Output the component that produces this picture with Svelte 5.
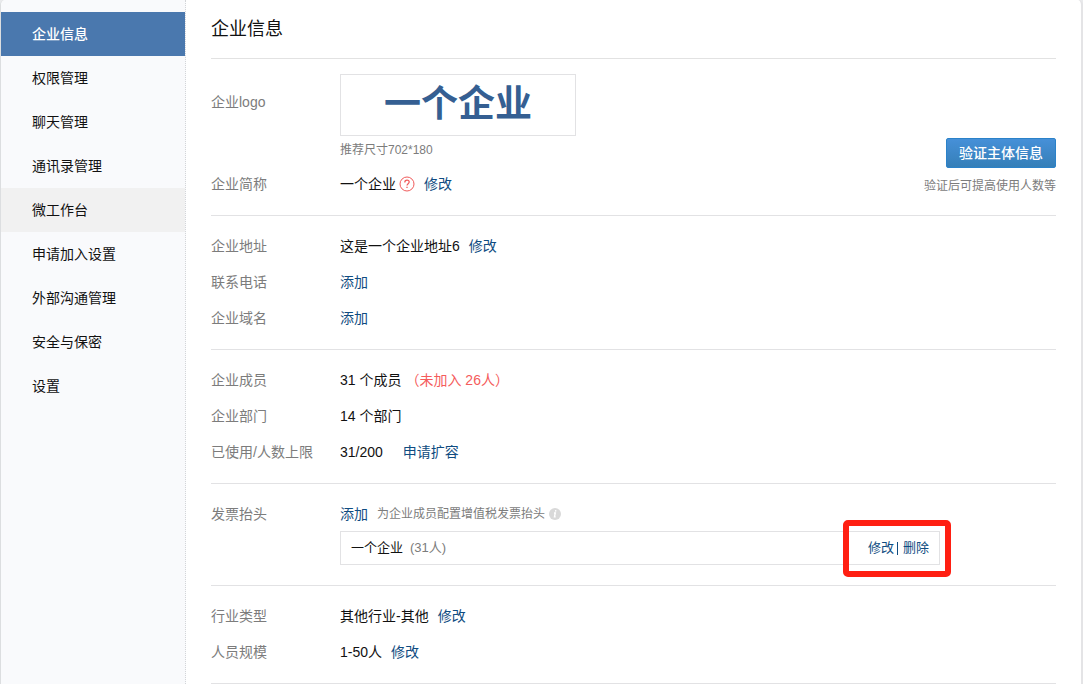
<script lang="ts">
    const menu = [
        '企业信息',
        '权限管理',
        '聊天管理',
        '通讯录管理',
        '微工作台',
        '申请加入设置',
        '外部沟通管理',
        '安全与保密',
        '设置'
    ];

    let active = $state('企业信息');
    const highlighted = '微工作台';
</script>

<div class="page">
    <nav class="sidebar">
        {#each menu as item}
            <a
                href="#menu"
                class="menu-item"
                class:active={item === active}
                class:highlighted={item === highlighted}
                onclick={() => (active = item)}
            >{item}</a>
        {/each}
    </nav>

    <main class="content">
        <h1>企业信息</h1>

        <section class="section profile">
            <div class="profile-rows">
                <div class="row">
                    <div class="label logo-label">企业logo</div>
                    <div class="value">
                        <div class="logo">一个企业</div>
                        <div class="logo-tip">推荐尺寸702*180</div>
                    </div>
                </div>
                <div class="row">
                    <div class="label">企业简称</div>
                    <div class="value line">
                        <span>一个企业</span>
                        <svg class="help" width="16" height="16" viewBox="0 0 16 16" fill="none" stroke="#f05b5b">
                            <circle cx="8" cy="8" r="7" />
                            <path d="M5.8 6.4C5.8 4.9 6.7 4.2 8 4.2s2.2.8 2.2 1.9c0 1.6-2.2 1.8-2.2 3.5" stroke-width="1.2" />
                            <path d="M8 10.7v1.3" stroke-width="1.3" />
                        </svg>
                        <a class="action" href="#edit-name">修改</a>
                    </div>
                </div>
            </div>
            <div class="verify">
                <button type="button">验证主体信息</button>
                <span>验证后可提高使用人数等</span>
            </div>
        </section>

        <section class="section">
            <div class="row">
                <div class="label">企业地址</div>
                <div class="value line">
                    <span>这是一个企业地址6</span>
                    <a class="action" href="#edit-address">修改</a>
                </div>
            </div>
            <div class="row">
                <div class="label">联系电话</div>
                <div class="value line"><a href="#add-phone">添加</a></div>
            </div>
            <div class="row">
                <div class="label">企业域名</div>
                <div class="value line"><a href="#add-domain">添加</a></div>
            </div>
        </section>

        <section class="section">
            <div class="row">
                <div class="label">企业成员</div>
                <div class="value line">
                    <span>31 个成员</span>
                    <span class="warn">（未加入 26人）</span>
                </div>
            </div>
            <div class="row">
                <div class="label">企业部门</div>
                <div class="value line">14 个部门</div>
            </div>
            <div class="row">
                <div class="label">已使用/人数上限</div>
                <div class="value line">
                    <span>31/200</span>
                    <a class="expand" href="#expand">申请扩容</a>
                </div>
            </div>
        </section>

        <section class="section">
            <div class="row">
                <div class="label">发票抬头</div>
                <div class="value">
                    <div class="line">
                        <a href="#add-invoice">添加</a>
                        <span class="invoice-tip">为企业成员配置增值税发票抬头</span>
                        <svg class="info" width="12" height="12" viewBox="0 0 12 12">
                            <circle cx="6" cy="6" r="6" fill="#d9d9d9" />
                            <path d="M6.8 2.2l-.3 1.4M5 5h1.3l-.8 3.9h1.2" fill="none" stroke="#fff" stroke-width="1.4" />
                        </svg>
                    </div>
                    <div class="invoice">
                        <span>一个企业</span>
                        <span class="count">(31人)</span>
                        <span class="invoice-actions">
                            <a href="#edit-invoice">修改</a><i></i><a href="#delete-invoice">删除</a>
                        </span>
                        <div class="marker"></div>
                    </div>
                </div>
            </div>
        </section>

        <section class="section">
            <div class="row">
                <div class="label">行业类型</div>
                <div class="value line">
                    <span>其他行业-其他</span>
                    <a class="action" href="#edit-industry">修改</a>
                </div>
            </div>
            <div class="row">
                <div class="label">人员规模</div>
                <div class="value line">
                    <span>1-50人</span>
                    <a class="action" href="#edit-scale">修改</a>
                </div>
            </div>
        </section>
    </main>
</div>

<style>
    :global(body) {
        margin: 0;
        background: #e9eaec;
    }

    .page {
        display: flex;
        box-sizing: border-box;
        min-height: 100vh;
        border-left: 1px solid #dcdee0;
        border-right: 2px solid #e4e4e6;
        border-radius: 5px 5px 0 0;
        background: #fff;
        color: #111;
        font-family: "Liberation Sans", "Noto Sans CJK SC", sans-serif;
        font-size: 14px;
        line-height: 36px;
    }

    a {
        color: #0f4c81;
        text-decoration: none;
    }

    .sidebar {
        flex: none;
        width: 184px;
        padding-top: 12px;
        border-right: 1px dotted #d3d5d8;
        border-top-left-radius: 5px;
        background: #f9fafc;
    }

    .menu-item {
        display: block;
        padding-left: 31px;
        line-height: 44px;
        color: #111;
    }

    .menu-item.highlighted {
        background: #f1f1f1;
    }

    .menu-item.active {
        background: #4a78ae;
        color: #fff;
        font-weight: 500;
    }

    .content {
        flex: 1;
        min-width: 0;
        padding: 0 25px;
    }

    h1 {
        margin: 0;
        border-bottom: 1px solid #e2e2e2;
        font-size: 18px;
        font-weight: 400;
        line-height: 58px;
    }

    .section {
        padding: 12px 0 13px;
        border-bottom: 1px solid #e2e2e4;
    }

    .profile {
        display: flex;
        padding-top: 15px;
    }

    .profile-rows {
        flex: 1;
    }

    .row {
        display: flex;
    }

    .label {
        flex: none;
        width: 129px;
        color: #7c7c7c;
    }

    .logo-label {
        padding-top: 10px;
    }

    .value {
        flex: 1;
        min-width: 0;
    }

    .line {
        display: flex;
        align-items: center;
    }

    .logo {
        box-sizing: border-box;
        width: 236px;
        height: 62px;
        border: 1px solid #e2e2e4;
        color: #355f92;
        font-family: "Noto Sans CJK SC", sans-serif;
        font-size: 37px;
        font-weight: 700;
        line-height: 52px;
        text-align: center;
    }

    .logo-tip {
        margin-bottom: 2px;
        color: #7c7c7c;
        font-size: 12px;
        line-height: 28px;
    }

    .help {
        margin-left: 3px;
    }

    .action {
        margin-left: 9px;
    }

    .verify {
        display: flex;
        flex-direction: column;
        align-items: flex-end;
        justify-content: flex-end;
        margin-bottom: -2px;
        color: #7c7c7c;
        font-size: 12px;
        line-height: 36px;
    }

    .verify button {
        height: 30px;
        padding: 0 12px;
        border: 1px solid #2b82c9;
        border-radius: 2px;
        background: linear-gradient(#4690d8, #357fb8);
        color: #fff;
        font-family: inherit;
        font-size: 14px;
        font-weight: 500;
        line-height: 28px;
        cursor: pointer;
    }

    .warn {
        margin-left: 4px;
        color: #f55c5c;
    }

    .expand {
        margin-left: 20px;
    }

    .invoice-tip {
        margin-left: 9px;
        color: #7c7c7c;
        font-size: 12px;
    }

    .info {
        margin-left: 4px;
    }

    .invoice {
        position: relative;
        display: flex;
        align-items: center;
        box-sizing: border-box;
        max-width: 600px;
        height: 34px;
        margin: -1px 0 7px;
        padding: 0 10px;
        border: 1px solid #e2e2e4;
        font-size: 13px;
        line-height: 32px;
    }

    .count {
        margin-left: 7px;
        color: #7c7c7c;
    }

    .invoice-actions {
        display: flex;
        align-items: center;
        margin-left: auto;
    }

    .invoice-actions i {
        width: 1px;
        height: 13px;
        margin: 0 5px 0 3px;
        background: #0f4c81;
    }

    .marker {
        position: absolute;
        top: -12px;
        right: -12px;
        bottom: -13px;
        width: 96px;
        border: 6px solid #ff1f12;
        border-radius: 5px;
        pointer-events: none;
    }
</style>
